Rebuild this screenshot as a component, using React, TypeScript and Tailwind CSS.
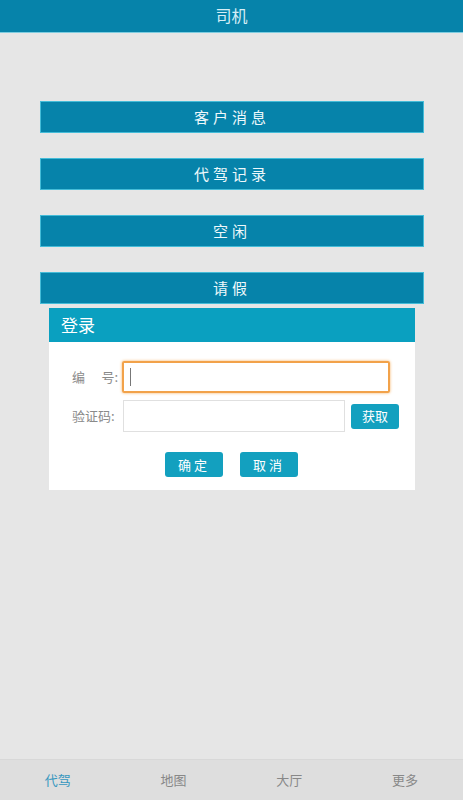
const font = { fontFamily: '"Noto Sans CJK SC", "Noto Sans", sans-serif' };

const menuItems = ["客户消息", "代驾记录", "空闲", "请假"];
const tabs = ["代驾", "地图", "大厅", "更多"];

export default function App() {
  return (
    <div style={font} className="flex h-[800px] w-[463px] flex-col bg-[#e6e6e6]">
      <header className="flex h-[33px] items-center justify-center border-b border-[#7fcde0] bg-[#0683aa] pb-[3px]">
        <span className="text-[16px] leading-none text-[#d6eef6]">司机</span>
      </header>

      <main className="flex flex-1 flex-col pt-[68px]">
        <div className="flex flex-col gap-[25px] px-[40px]">
          {menuItems.map((item) => (
            <button
              key={item}
              type="button"
              className="flex h-[32px] w-[384px] items-center justify-center border border-[#44bcd8] bg-[#0683aa] text-[15px] tracking-[4px] text-[#eef8fb]"
            >
              {item}
            </button>
          ))}
        </div>

        <section className="ml-[49px] mt-[4px] w-[366px] bg-white">
          <div className="flex h-[34px] items-center bg-[#0aa0c0] px-[12px] text-[17px] text-white">登录</div>
          <div className="flex flex-col pb-[13px] pl-[23px] pt-[19px]">
            <div className="flex items-center">
              <span className="flex w-[50px] justify-between pr-[4px] text-[13px] text-[#8a8a8a]">
                <span>编</span>
                <span>号:</span>
              </span>
              <div className="flex h-[32px] w-[268px] items-center rounded-[2px] border-2 border-[#f2a24a] px-[6px] shadow-[0_0_3px_#f5b060]">
                <span className="h-[18px] w-px bg-[#777]" />
              </div>
            </div>
            <div className="mt-[7px] flex items-center">
              <span className="w-[51px] text-[13px] text-[#8a8a8a]">验证码:</span>
              <div className="h-[32px] w-[222px] border border-[#e0e0e0] bg-white" />
              <button
                type="button"
                className="ml-[6px] h-[25px] w-[48px] rounded-[3px] bg-[#13a0bf] text-[13px] text-white"
              >
                获取
              </button>
            </div>
            <div className="mt-[20px] flex gap-[17px] pl-[93px]">
              <button type="button" className="h-[25px] w-[58px] rounded-[3px] bg-[#13a0bf] text-[13px] tracking-[3px] text-white">
                确定
              </button>
              <button type="button" className="h-[25px] w-[58px] rounded-[3px] bg-[#13a0bf] text-[13px] tracking-[3px] text-white">
                取消
              </button>
            </div>
          </div>
        </section>
      </main>

      <nav className="grid h-[41px] grid-cols-4 border-t border-[#d8d8d8] bg-[#dedede]">
        {tabs.map((tab, i) => (
          <div
            key={tab}
            className={`flex items-center justify-center text-[13px] ${i === 0 ? "text-[#3797bf]" : "text-[#888]"}`}
          >
            {tab}
          </div>
        ))}
      </nav>
    </div>
  );
}
